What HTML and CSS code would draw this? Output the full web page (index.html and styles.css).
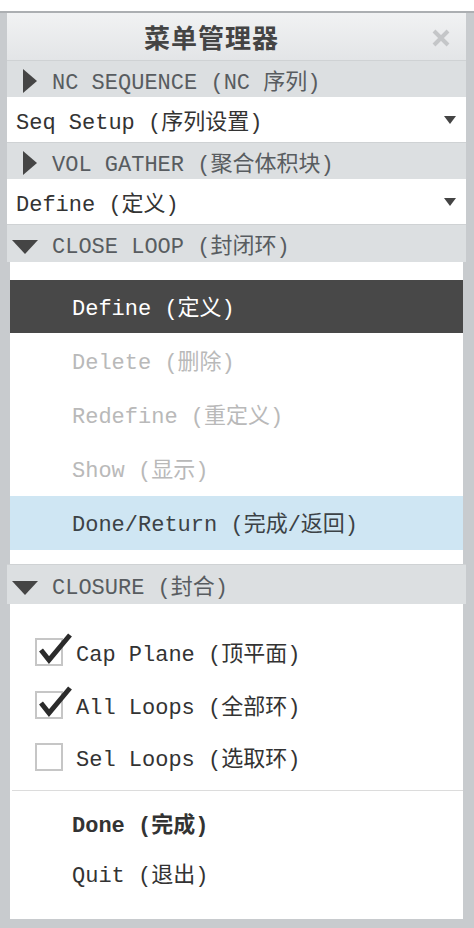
FILE: index.html
```html
<!DOCTYPE html>
<html lang="zh-CN">
<head>
    <meta charset="UTF-8">
    <meta name="viewport" content="width=device-width, initial-scale=1.0">
    <title>菜单管理器</title>
    <link rel="stylesheet" href="styles.css">
</head>
<body>
    <div class="window">
        <div class="titlebar">
            <span class="title">菜单管理器</span>
            <span class="close">
                <svg width="20" height="20" viewBox="0 0 20 20"><path d="M3 3 L17 17 M17 3 L3 17" stroke="#c4c6c8" stroke-width="4" fill="none"/></svg>
            </span>
        </div>

        <div class="group-head nc"><span class="tri-right"></span>NC SEQUENCE (NC 序列)</div>
        <div class="select">Seq Setup (序列设置)<span class="caret"></span></div>

        <div class="group-head vol"><span class="tri-right"></span>VOL GATHER (聚合体积块)</div>
        <div class="select">Define (定义)<span class="caret"></span></div>

        <div class="group-head loop"><span class="tri-down"></span>CLOSE LOOP (封闭环)</div>
        <div class="menu-list">
            <div class="item selected">Define (定义)</div>
            <div class="item disabled">Delete (删除)</div>
            <div class="item disabled">Redefine (重定义)</div>
            <div class="item disabled">Show (显示)</div>
            <div class="item hover">Done/Return (完成/返回)</div>
        </div>

        <div class="group-head closure"><span class="tri-down"></span>CLOSURE (封合)</div>
        <div class="closure-panel">
            <div class="check-row"><span class="box checked"><svg width="38" height="34" viewBox="0 0 38 34"><path d="M5 18 L13 28 L34 3" stroke="#2b2b2b" stroke-width="5" fill="none" stroke-linejoin="miter"/></svg></span>Cap Plane (顶平面)</div>
            <div class="check-row"><span class="box checked"><svg width="38" height="34" viewBox="0 0 38 34"><path d="M5 18 L13 28 L34 3" stroke="#2b2b2b" stroke-width="5" fill="none" stroke-linejoin="miter"/></svg></span>All Loops (全部环)</div>
            <div class="check-row last"><span class="box"></span>Sel Loops (选取环)</div>
            <div class="separator"></div>
            <div class="actions">
                <div class="action done">Done (完成)</div>
                <div class="action">Quit (退出)</div>
            </div>
        </div>
    </div>
</body>
</html>
```

FILE: styles.css
```css
body {
    margin: 0;
    background: #ffffff;
    font-family: "Liberation Mono", "Noto Sans CJK SC", monospace;
    font-size: 22px;
    color: #333;
}
.window {
    margin-top: 11px;
    border-top: 2px solid #acafb2;
    background: #c8cbce;
    padding: 0 8px 10px 7px;
}
.titlebar {
    height: 47px;
    display: flex;
    align-items: center;
    background: linear-gradient(#f1f2f3, #e3e5e7);
}
.title {
    flex: 1;
    text-align: center;
    font-family: "Noto Sans CJK SC", sans-serif;
    font-weight: bold;
    font-size: 26px;
    color: #444;
    letter-spacing: 1px;
}
.close {
    width: 50px;
    display: flex;
    justify-content: center;
    padding-top: 3px;
}
.group-head {
    height: 37px;
    display: flex;
    align-items: center;
    background: #dcdfe1;
    border-top: 1px solid #cfd2d4;
    box-sizing: border-box;
    color: #585c60;
    padding-left: 16px;
}
.group-head.loop {
    height: 38px;
    padding-left: 5px;
}
.group-head.closure {
    height: 40px;
    padding-left: 5px;
}
.tri-right {
    width: 0;
    height: 0;
    border-top: 12px solid transparent;
    border-bottom: 12px solid transparent;
    border-left: 14px solid #454545;
    margin-right: 15px;
    margin-top: 4px;
}
.tri-down {
    width: 0;
    height: 0;
    border-left: 13px solid transparent;
    border-right: 13px solid transparent;
    border-top: 14px solid #454545;
    margin-right: 14px;
    margin-top: 6px;
}
.select {
    height: 45px;
    display: flex;
    align-items: center;
    background: #fff;
    padding: 0 10px 0 9px;
    color: #333;
}
.caret {
    margin-left: auto;
    width: 0;
    height: 0;
    border-left: 6px solid transparent;
    border-right: 6px solid transparent;
    border-top: 8px solid #444;
}
.menu-list {
    background: #fff;
    margin: 0 3px;
    padding: 18px 0 14px;
}
.item {
    height: 54px;
    display: flex;
    align-items: center;
    padding-left: 62px;
    padding-bottom: 3px;
    box-sizing: border-box;
    color: #333;
}
.item.selected {
    height: 53px;
    margin-bottom: 1px;
    background: #484848;
    color: #fff;
}
.item.disabled {
    color: #b9b9b9;
}
.item.hover {
    background: #cfe6f3;
    color: #3c4246;
}
.closure-panel {
    background: #fff;
    margin: 0 3px;
    padding: 21px 0 22px;
}
.check-row {
    height: 53px;
    display: flex;
    align-items: center;
    padding-left: 25px;
    color: #333;
}
.check-row.last {
    height: 51px;
}
.box {
    position: relative;
    width: 24px;
    height: 24px;
    border: 2px solid #c6c6c6;
    margin-right: 13px;
    background: #fff;
}
.box svg {
    position: absolute;
    left: -1px;
    top: -8px;
}
.separator {
    margin: 8px 0 6px 2px;
    border-top: 1px solid #dcdcdc;
}
.action {
    height: 50px;
    display: flex;
    align-items: center;
    padding-left: 62px;
    color: #333;
}
.action.done {
    font-weight: bold;
}
```
